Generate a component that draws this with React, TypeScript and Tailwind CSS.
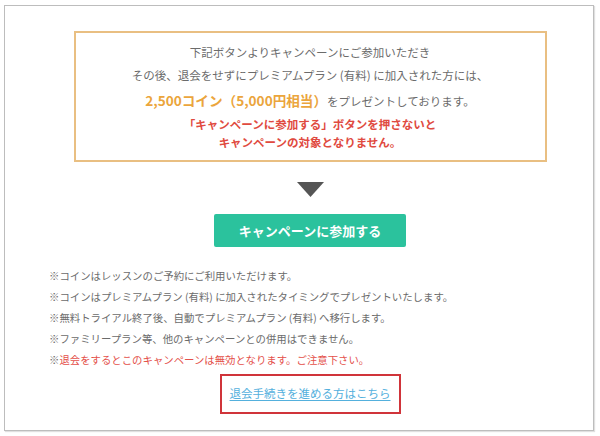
const notes: { text: string; red?: boolean }[] = [
  { text: '※コインはレッスンのご予約にご利用いただけます。' },
  { text: '※コインはプレミアムプラン (有料) に加入されたタイミングでプレゼントいたします。' },
  { text: '※無料トライアル終了後、自動でプレミアムプラン (有料) へ移行します。' },
  { text: '※ファミリープラン等、他のキャンペーンとの併用はできません。' },
  { text: '退会をするとこのキャンペーンは無効となります。ご注意下さい。', red: true },
];

export default function App() {
  return (
    <div
      className="min-h-[436px] w-[600px] bg-white pt-[5px]"
      style={{ fontFamily: '"Noto Sans CJK JP", "Noto Sans", sans-serif' }}
    >
      <div className="ml-[4px] h-[426px] w-[590px] border border-[#bdbdbd] bg-white pl-[44px] pt-[25px] shadow-[1px_1px_1px_rgba(0,0,0,0.12)]">
        <div className="flex w-[522px] flex-col items-center">
          <div className="w-[473px] border-2 border-[#e9bf82] pt-[8px] pb-[9px] text-center text-[11.5px] text-[#6b6b6b]">
            <div className="h-[23px] leading-[23px]">下記ボタンよりキャンペーンにご参加いただき</div>
            <div className="h-[23px] leading-[23px]">
              その後、退会をせずにプレミアムプラン (有料) に加入された方には、
            </div>
            <div className="h-[26px] leading-[26px]">
              <span className="text-[13.6px] font-semibold text-[#eba53c]">2,500コイン（5,000円相当）</span>
              をプレゼントしております。
            </div>
            <div className="mt-[2px] text-[11.5px] font-bold leading-[18px] text-[#e04a40]">
              <div>「キャンペーンに参加する」ボタンを押さないと</div>
              <div>キャンペーンの対象となりません。</div>
            </div>
          </div>

          <svg className="mt-[20px]" width="27" height="15" viewBox="0 0 27 15">
            <polygon points="0,0 27,0 13.5,15" fill="#555" />
          </svg>

          <button
            type="button"
            className="mt-[17px] h-[33px] w-[192px] rounded-[2px] bg-[#2bc29d] text-[13px] font-bold text-white"
          >
            キャンペーンに参加する
          </button>

          <ul className="mt-[18px] w-full text-[10.4px] leading-[21px] text-[#6b6b6b]">
            {notes.map((n) => (
              <li key={n.text} className="h-[21px]">
                {n.red ? (
                  <>
                    ※<span className="text-[#e4504a]">{n.text}</span>
                  </>
                ) : (
                  n.text
                )}
              </li>
            ))}
          </ul>

          <div className="mt-[4px] flex h-[40px] w-[181px] items-center justify-center border-2 border-[#d0343a]">
            <a href="#" className="text-[11.5px] text-[#54b0dd] underline underline-offset-2">
              退会手続きを進める方はこちら
            </a>
          </div>
        </div>
      </div>
    </div>
  );
}
